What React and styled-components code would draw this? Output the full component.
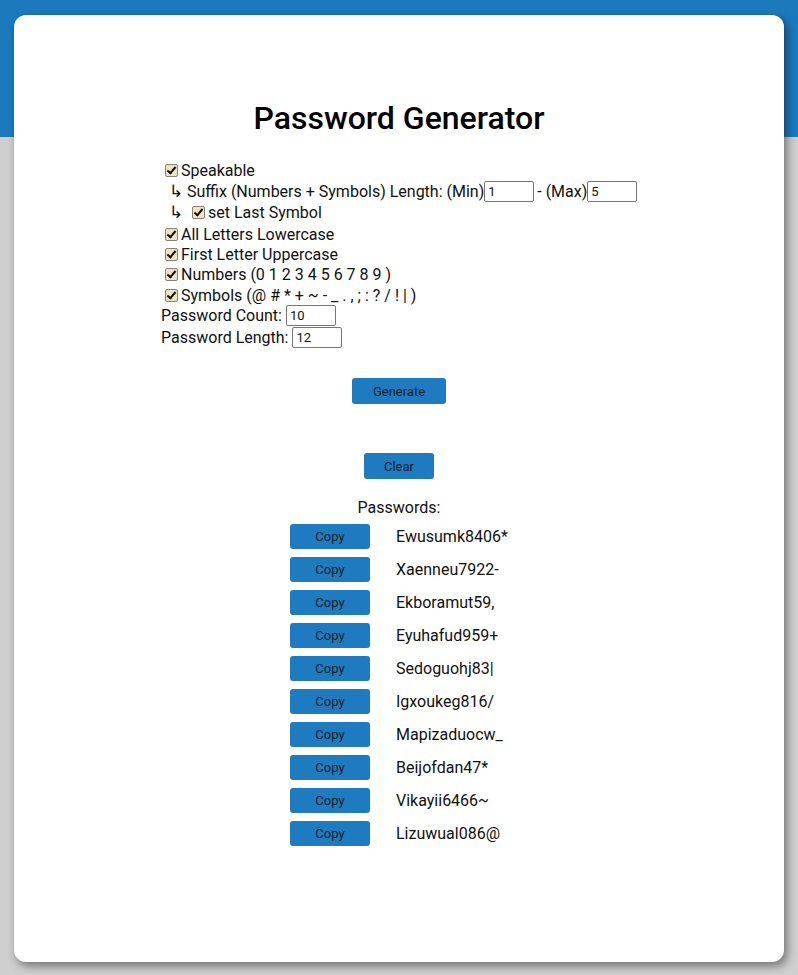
import React from 'react';
import styled, { createGlobalStyle } from 'styled-components';

const GlobalStyle = createGlobalStyle`
    html, body {
        margin: 0;
        padding: 0;
    }
    body {
        font-family: Roboto, "Liberation Sans", sans-serif;
        background: linear-gradient(#1c7abc 0, #1c7abc 137px, #cfcfcf 137px, #cfcfcf 100%);
        min-height: 975px;
        color: #111;
    }
`;

const Page = styled.div`
    padding: 15px 14px 13px 14px;
`;

const Card = styled.main`
    background: #fff;
    border-radius: 12px;
    box-shadow: 3px 4px 10px rgba(0, 0, 0, 0.45);
    height: 947px;
    box-sizing: border-box;
    padding-top: 85px;
`;

const Title = styled.h1`
    margin: 0;
    text-align: center;
    font-size: 32px;
    line-height: 37px;
    font-weight: 500;
    color: #000;
`;

const Form = styled.div`
    width: 476px;
    margin: 23px auto 0;
    font-size: 16px;
`;

const Row = styled.div`
    display: flex;
    align-items: center;
    height: ${p => p.$h || 20}px;
    padding-left: ${p => p.$indent || 0}px;
    white-space: pre;
`;

const Arrow = styled.span`
    font-family: "DejaVu Sans", sans-serif;
    font-size: 17px;
    font-weight: 300;
    line-height: 1;
    margin-right: ${p => p.$gap}px;
`;

const Check = styled.input.attrs({ type: 'checkbox' })`
    appearance: none;
    width: 13px;
    height: 13px;
    margin: 3px 3px 3px 4px;
    border: 1px solid #8a8170;
    border-radius: 2px;
    background: #efe3c6;
    box-sizing: border-box;
    position: relative;
    flex: none;

    &:checked::after {
        content: '';
        position: absolute;
        left: 3px;
        top: 0px;
        width: 3px;
        height: 7px;
        border: solid #111;
        border-width: 0 2px 2px 0;
        transform: rotate(40deg);
    }
`;

const NumInput = styled.input`
    width: 50px;
    height: 21px;
    box-sizing: border-box;
    border: 1px solid #767676;
    border-radius: 2px;
    font-family: Roboto, "Liberation Sans", sans-serif;
    font-size: 13px;
    padding: 1px 3px;
    margin: 0 ${p => p.$mr || 0}px 0 ${p => p.$ml || 0}px;
    color: #111;
`;

const Actions = styled.div`
    display: flex;
    flex-direction: column;
    align-items: center;
    gap: 49px;
    margin-top: 30px;
`;

const Button = styled.button`
    background: #1e7bbf;
    border: none;
    border-radius: 3px;
    color: #15202b;
    font-family: Roboto, "Liberation Sans", sans-serif;
    font-size: 13px;
    height: ${p => p.$h || 26}px;
    width: ${p => p.$w}px;
    padding: 0;
    cursor: pointer;
`;

const ListLabel = styled.div`
    text-align: center;
    font-size: 16px;
    margin-top: 19px;
    line-height: 19px;
`;

const List = styled.div`
    width: 218px;
    margin: 7px auto 0;
    display: grid;
    grid-template-columns: 80px 1fr;
    column-gap: 26px;
    row-gap: 8px;
    align-items: center;
    font-size: 16px;
`;

const passwords = [
    'Ewusumk8406*',
    'Xaenneu7922-',
    'Ekboramut59,',
    'Eyuhafud959+',
    'Sedoguohj83|',
    'Igxoukeg816/',
    'Mapizaduocw_',
    'Beijofdan47*',
    'Vikayii6466~',
    'Lizuwual086@',
];

export default function App() {
    return (
        <Page>
            <GlobalStyle />
            <Card>
                <Title>Password Generator</Title>
                <Form>
                    <Row $h={21}><Check defaultChecked />Speakable</Row>
                    <Row $h={20.5} $indent={8}>
                        <Arrow $gap={4}>↳</Arrow>Suffix (Numbers + Symbols) Length: (Min)
                        <NumInput defaultValue="1" $mr={3} />- (Max)
                        <NumInput defaultValue="5" />
                    </Row>
                    <Row $h={22.5} $indent={8}>
                        <Arrow $gap={5}>↳</Arrow><Check defaultChecked />set Last Symbol
                    </Row>
                    <Row><Check defaultChecked />All Letters Lowercase</Row>
                    <Row><Check defaultChecked />First Letter Uppercase</Row>
                    <Row $h={21}><Check defaultChecked />Numbers (0 1 2 3 4 5 6 7 8 9 )</Row>
                    <Row><Check defaultChecked />Symbols (@ # * + ~ - _ . , ; : ? / ! | )</Row>
                    <Row $h={21}>Password Count: <NumInput defaultValue="10" /></Row>
                    <Row $h={22}>Password Length: <NumInput defaultValue="12" /></Row>
                </Form>
                <Actions>
                    <Button $w={94}>Generate</Button>
                    <Button $w={70}>Clear</Button>
                </Actions>
                <ListLabel>Passwords:</ListLabel>
                <List>
                    {passwords.map(pw => (
                        <React.Fragment key={pw}>
                            <Button $w={80} $h={25}>Copy</Button>
                            <span>{pw}</span>
                        </React.Fragment>
                    ))}
                </List>
            </Card>
        </Page>
    );
}
